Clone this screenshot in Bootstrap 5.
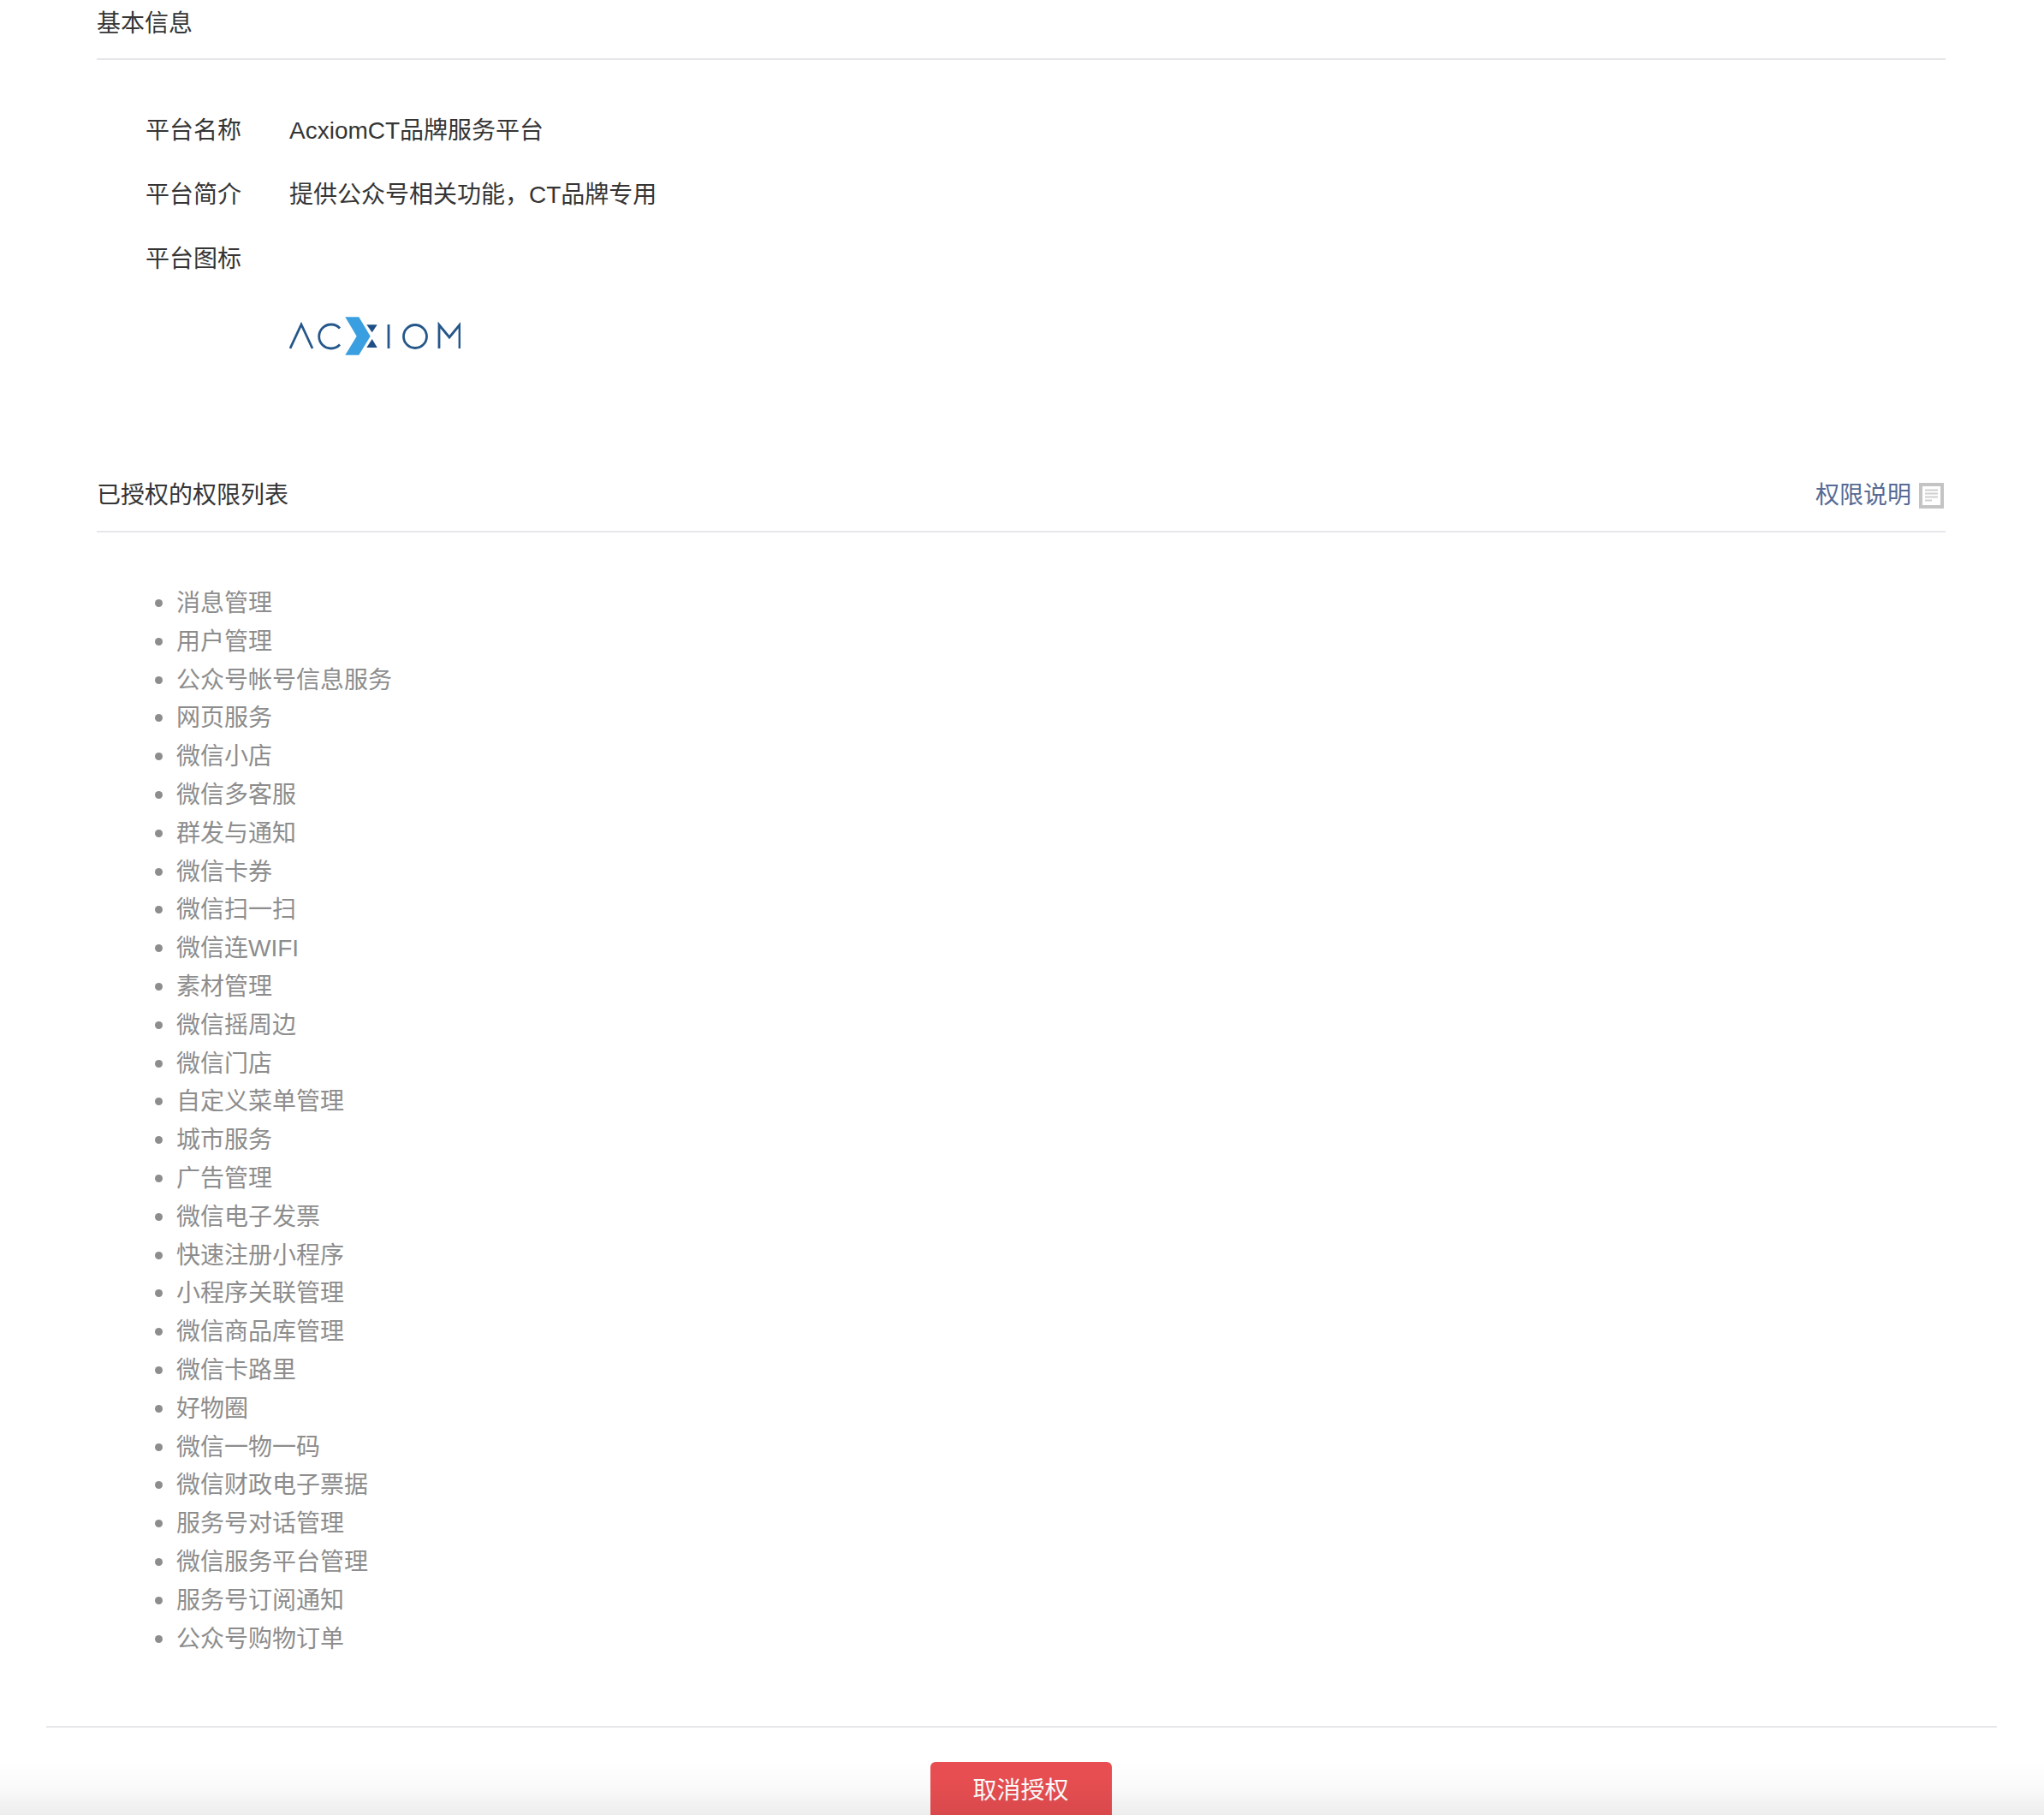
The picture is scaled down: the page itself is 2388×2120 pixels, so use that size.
<!DOCTYPE html>
<html lang="zh-CN">
<head>
<meta charset="utf-8">
<title>授权详情</title>
<link href="https://cdn.jsdelivr.net/npm/bootstrap@5.3.0/dist/css/bootstrap.min.css" rel="stylesheet">
<style>
html, body { height: 2120px; overflow: hidden; }
body { font-family: "Liberation Sans", "Noto Sans CJK SC", sans-serif; font-size: 28px; color: #353535; background: #fff; }
.auth-main { padding: 0 115px 0 113px; }
.sec-head { height: 70px; line-height: 55px; border-bottom: 2px solid #e7e7eb; }
.sec-head.second { height: 71px; line-height: 56px; padding-bottom: 13px; }
.info-list { padding: 45px 0 0 57px; height: 481px; }
.info-row { height: 75px; line-height: 75px; display: flex; }
.info-label { width: 168px; flex: none; }
.logo-box { margin: 30px 0 0 168px; display: block; }
.perm-list { margin: 0; padding: 61px 0 0 93px; color: #8d8d8d; line-height: 44.8px; height: 1394px; }
.perm-list li::marker { font-size: 30px; line-height: 1; }
.doc-link { color: #576b95; text-decoration: none; padding-right: 2px; }
.doc-ico { width: 29px; height: 30px; margin-left: 9px; display: block; }
.auth-foot { margin: 0 55px 0 54px; border-top: 2px solid #e7e7eb; padding-top: 40px; }
.revoke-btn { width: 212px; height: 68px; margin-left: -2px; font-size: 28px; line-height: 66px; padding: 0; color: #fff; background: #e94f52; border: 0; border-radius: 6px; }
.bottom-fade { position: fixed; left: 0; right: 0; bottom: 0; height: 64px; pointer-events: none; background: linear-gradient(to bottom, rgba(0,0,0,0), rgba(0,0,0,.02) 50%, rgba(0,0,0,.07)); }
</style>
</head>
<body>
<main class="auth-main">
  <div class="sec-head">基本信息</div>
  <div class="info-list">
    <div class="info-row"><div class="info-label">平台名称</div><div>AcxiomCT品牌服务平台</div></div>
    <div class="info-row"><div class="info-label">平台简介</div><div>提供公众号相关功能，CT品牌专用</div></div>
    <div class="info-row"><div class="info-label">平台图标</div></div>
    <svg class="logo-box" width="200" height="46" viewBox="0 0 200 46" role="img" aria-label="Acxiom">
      <g fill="none" stroke="#25578a" stroke-width="2.8">
        <polyline points="1,37 14,9 27,37"/>
        <path d="M59 13.5A14 14 0 1 0 59 32.5"/>
        <line x1="116" y1="9" x2="116" y2="37"/>
        <circle cx="147" cy="23" r="13.5"/>
        <polyline points="175,37 175,9.5 187,24 199,9.5 199,37"/>
      </g>
      <polygon fill="#3a9fe0" points="65.3,0.3 81.3,0.3 94.7,22.7 81.3,44.7 65.3,44.7 78.7,22.7"/>
      <polygon fill="#1d4f86" points="90.3,9.3 102.7,9.3 96.7,18.3"/>
      <polygon fill="#1d4f86" points="96.7,26 102.7,36 90.3,36"/>
    </svg>
  </div>
  <div class="sec-head second d-flex justify-content-between align-items-center">
    <span>已授权的权限列表</span>
    <a class="doc-link d-flex align-items-center" href="#">权限说明
      <svg class="doc-ico" viewBox="0 0 29 30" aria-hidden="true">
        <rect x="2" y="2" width="25" height="26" fill="#fff" stroke="#c4c4c4" stroke-width="4"/>
        <path d="M7 8.5h15M7 12.5h15M7 16.5h15M7 20.5h8" stroke="#cfcfcf" stroke-width="2" fill="none"/>
      </svg>
    </a>
  </div>
  <ul class="perm-list">
    <li>消息管理</li>
    <li>用户管理</li>
    <li>公众号帐号信息服务</li>
    <li>网页服务</li>
    <li>微信小店</li>
    <li>微信多客服</li>
    <li>群发与通知</li>
    <li>微信卡券</li>
    <li>微信扫一扫</li>
    <li>微信连WIFI</li>
    <li>素材管理</li>
    <li>微信摇周边</li>
    <li>微信门店</li>
    <li>自定义菜单管理</li>
    <li>城市服务</li>
    <li>广告管理</li>
    <li>微信电子发票</li>
    <li>快速注册小程序</li>
    <li>小程序关联管理</li>
    <li>微信商品库管理</li>
    <li>微信卡路里</li>
    <li>好物圈</li>
    <li>微信一物一码</li>
    <li>微信财政电子票据</li>
    <li>服务号对话管理</li>
    <li>微信服务平台管理</li>
    <li>服务号订阅通知</li>
    <li>公众号购物订单</li>
  </ul>
</main>
<footer class="auth-foot text-center">
  <button type="button" class="btn revoke-btn">取消授权</button>
</footer>
<div class="bottom-fade"></div>
<script src="https://cdn.jsdelivr.net/npm/bootstrap@5.3.0/dist/js/bootstrap.bundle.min.js"></script>
</body>
</html>
